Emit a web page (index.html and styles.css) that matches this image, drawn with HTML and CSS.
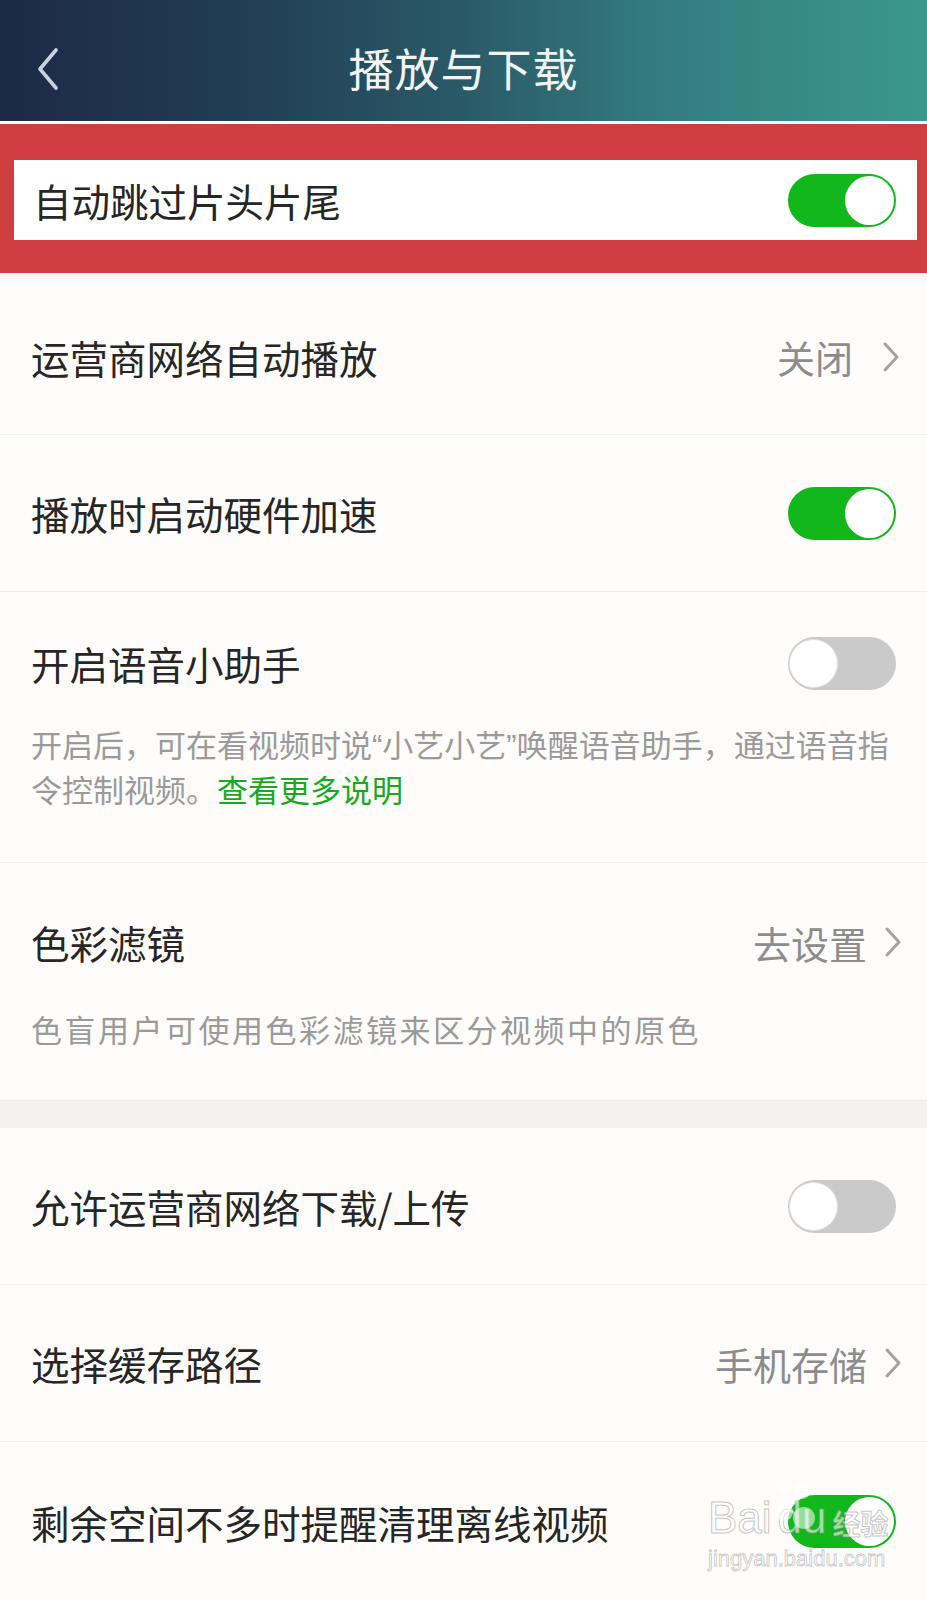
FILE: index.html
```html
<!DOCTYPE html>
<html lang="zh-CN">
<head>
<meta charset="utf-8">
<title>播放与下载</title>
<link rel="stylesheet" href="styles.css">
</head>
<body>
<div class="page">
  <header class="topbar">
    <svg class="back" width="26" height="44" viewBox="0 0 26 44"><path d="M21 3 L5 22 L21 41" fill="none" stroke="#c9d2de" stroke-width="3.6" stroke-linecap="round" stroke-linejoin="round"/></svg>
    <h1 class="title">播放与下载</h1>
  </header>
  <div class="divider-white"></div>

  <section class="highlight">
    <div class="highlight-box">
      <span class="label">自动跳过片头片尾</span>
      <span class="toggle on"><span class="knob"></span></span>
    </div>
  </section>

  <div class="row first">
    <span class="label">运营商网络自动播放</span>
    <span class="value wide">关闭<svg class="chev" width="18" height="32" viewBox="0 0 18 32"><path d="M3 3 L15 16 L3 29" fill="none" stroke="#a3a3a3" stroke-width="3" stroke-linecap="round" stroke-linejoin="round"/></svg></span>
  </div>

  <div class="row">
    <span class="label">播放时启动硬件加速</span>
    <span class="toggle on"><span class="knob"></span></span>
  </div>

  <div class="row tall voice">
    <div class="row-head">
      <span class="label">开启语音小助手</span>
      <span class="toggle off"><span class="knob"></span></span>
    </div>
    <p class="desc">开启后，可在看视频时说<span class="q">“</span>小艺小艺<span class="q">”</span>唤醒语音助手，通过语音指令控制视频。<span class="link">查看更多说明</span></p>
  </div>

  <div class="row tall filter">
    <div class="row-head">
      <span class="label">色彩滤镜</span>
      <span class="value">去设置<svg class="chev" width="18" height="32" viewBox="0 0 18 32"><path d="M3 3 L15 16 L3 29" fill="none" stroke="#a3a3a3" stroke-width="3" stroke-linecap="round" stroke-linejoin="round"/></svg></span>
    </div>
    <p class="desc">色盲用户可使用色彩滤镜来区分视频中的原色</p>
  </div>

  <div class="gap"></div>

  <div class="row">
    <span class="label">允许运营商网络下载/上传</span>
    <span class="toggle off"><span class="knob"></span></span>
  </div>

  <div class="row">
    <span class="label">选择缓存路径</span>
    <span class="value">手机存储<svg class="chev" width="18" height="32" viewBox="0 0 18 32"><path d="M3 3 L15 16 L3 29" fill="none" stroke="#a3a3a3" stroke-width="3" stroke-linecap="round" stroke-linejoin="round"/></svg></span>
  </div>

  <div class="row last">
    <span class="label">剩余空间不多时提醒清理离线视频</span>
    <span class="toggle on"><span class="knob"></span></span>
  </div>

  <div class="watermark">
    <div class="wm-top"><span class="wm-bai">Bai</span><span class="wm-du">du</span><span class="wm-cn">经验</span>
      <svg class="paw" width="60" height="70" viewBox="0 0 60 70"><circle cx="12" cy="12" r="8" fill="rgba(255,255,255,0.55)"/><circle cx="30" cy="16" r="9" fill="rgba(255,255,255,0.55)"/><circle cx="12" cy="38" r="9" fill="rgba(255,255,255,0.55)"/><circle cx="32" cy="44" r="11" fill="rgba(255,255,255,0.55)"/></svg>
    </div>
    <div class="wm-url">jingyan.baidu.com</div>
  </div>
</div>
</body>
</html>
```

FILE: styles.css
```css
* { box-sizing: border-box; }

html, body {
  margin: 0;
  padding: 0;
  background: #fdfcfa;
}

body {
  font-family: "Noto Sans CJK SC", "Noto Sans", sans-serif;
  color: #262626;
}

.page {
  position: relative;
  width: 927px;
  min-height: 1600px;
  overflow: hidden;
  background: #fdfcfa;
}

.topbar {
  position: relative;
  height: 121px;
  display: flex;
  align-items: center;
  justify-content: center;
  background: linear-gradient(90deg, #1c2947 0%, #213c55 25%, #2a5a67 50%, #347d80 72%, #3b988c 100%);
}

.back {
  position: absolute;
  left: 35px;
  top: 47px;
}

.title {
  margin: 14px 0 0 0;
  font-size: 45px;
  font-weight: 400;
  color: #f2f4f4;
  letter-spacing: 1px;
  line-height: 1;
}

.divider-white {
  height: 3px;
  background: #ffffff;
}

.highlight {
  background: #cf3d40;
  padding: 36px 10px 33px 14px;
}

.highlight-box {
  height: 80px;
  background: #ffffff;
  display: flex;
  align-items: center;
  justify-content: space-between;
  padding: 0 21px 0 19px;
}

.label {
  font-size: 38.5px;
  line-height: 56px;
  color: #262626;
  white-space: nowrap;
}

.row {
  display: flex;
  align-items: center;
  justify-content: space-between;
  height: 157px;
  padding: 0 31px;
  border-bottom: 1px solid #efeeec;
}

.row.first {
  height: 162px;
  padding-top: 6px;
  background: linear-gradient(#f5f4f2 0, #fdfcfa 14px);
}

.row.last {
  border-bottom: none;
  height: 159px;
}

.row.tall {
  display: block;
  height: auto;
}

.row.voice {
  padding-top: 43px;
  padding-bottom: 50px;
  height: 271px;
}

.row.filter {
  padding-top: 51px;
  padding-bottom: 50px;
  height: 237px;
  border-bottom: none;
}

.row-head {
  display: flex;
  align-items: center;
  justify-content: space-between;
  height: 56px;
}

.desc {
  margin: 0;
  font-size: 31px;
  line-height: 45px;
  color: #9a9a9a;
  margin-right: -12px;
}

.q {
  font-family: "Liberation Sans", sans-serif;
  line-height: 0;
}

.voice .desc {
  margin-top: 30px;
}

.filter .desc {
  margin-top: 36px;
  letter-spacing: 2.5px;
}

.link {
  color: #17a91f;
  letter-spacing: 0;
}

.value {
  display: flex;
  align-items: center;
  gap: 17px;
  font-size: 38px;
  color: #8c8c8c;
  margin-right: -6px;
}

.value.wide {
  gap: 29px;
  margin-right: -4px;
}

.chev {
  display: block;
}

.gap {
  height: 28px;
  background: #f3f2f0;
  border-top: 1px solid #ecebe9;
}

.toggle {
  position: relative;
  display: inline-block;
  width: 108px;
  height: 53px;
  border-radius: 27px;
  flex-shrink: 0;
}

.toggle.on {
  background: #12b71b;
}

.toggle.off {
  background: #cacaca;
}

.toggle .knob {
  position: absolute;
  top: 2px;
  width: 49px;
  height: 49px;
  border-radius: 50%;
  background: #ffffff;
}

.toggle.on .knob {
  right: 2px;
}

.toggle.off .knob {
  left: 1px;
  border: 1px solid #e2e2e2;
}

.watermark {
  position: absolute;
  left: 708px;
  top: 1480px;
  width: 200px;
  white-space: nowrap;
  pointer-events: none;
  font-family: "Liberation Sans", sans-serif;
}

.wm-top {
  position: relative;
  display: flex;
  align-items: flex-end;
  height: 60px;
  font-size: 44px;
  line-height: 44px;
  color: rgba(255, 255, 255, 0.6);
  -webkit-text-stroke: 1px rgba(140, 140, 140, 0.5);
}

.wm-du {
  margin-left: 6px;
}

.wm-cn {
  margin-left: 6px;
  font-size: 28px;
  line-height: 34px;
  font-weight: 700;
  font-family: "Noto Sans CJK SC", sans-serif;
}

.paw {
  position: absolute;
  left: 64px;
  top: -6px;
}

.wm-url {
  margin-top: 6px;
  font-size: 22px;
  color: rgba(255, 255, 255, 0.6);
  -webkit-text-stroke: 0.8px rgba(140, 140, 140, 0.5);
}
```
